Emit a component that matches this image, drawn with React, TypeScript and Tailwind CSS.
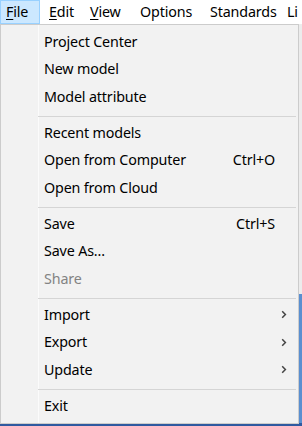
import React from 'react';

type Item =
  | { kind: 'item'; label: string; shortcut?: string; submenu?: boolean; disabled?: boolean }
  | { kind: 'sep' };

const items: Item[] = [
  { kind: 'item', label: 'Project Center' },
  { kind: 'item', label: 'New model' },
  { kind: 'item', label: 'Model attribute' },
  { kind: 'sep' },
  { kind: 'item', label: 'Recent models' },
  { kind: 'item', label: 'Open from Computer', shortcut: 'Ctrl+O' },
  { kind: 'item', label: 'Open from Cloud' },
  { kind: 'sep' },
  { kind: 'item', label: 'Save', shortcut: 'Ctrl+S' },
  { kind: 'item', label: 'Save As...' },
  { kind: 'item', label: 'Share', disabled: true },
  { kind: 'sep' },
  { kind: 'item', label: 'Import', submenu: true },
  { kind: 'item', label: 'Export', submenu: true },
  { kind: 'item', label: 'Update', submenu: true },
  { kind: 'sep' },
  { kind: 'item', label: 'Exit' },
];

const Chevron: React.FC = () => (
  <svg width="6" height="9" viewBox="0 0 6 9" className="block">
    <path d="M1.2 1.3 L4.4 4.5 L1.2 7.7" fill="none" stroke="#444" strokeWidth="1.5" />
  </svg>
);

const MenuRow: React.FC<{ item: Extract<Item, { kind: 'item' }> }> = ({ item }) => (
  <div className={`flex items-center h-[27.5px] pl-[43px] ${item.disabled ? 'text-[#838383]' : 'text-black'}`}>
    <span className="flex-1 whitespace-nowrap">{item.label}</span>
    {item.shortcut && <span className="whitespace-nowrap">{item.shortcut}</span>}
    <span className="w-[23px] shrink-0 flex items-center pl-[6px]">
      {item.submenu && <Chevron />}
    </span>
  </div>
);

const App: React.FC = () => {
  return (
    <div className="w-[302px] h-[426px] bg-white overflow-hidden flex flex-col font-['Segoe_UI','Noto_Sans',sans-serif] text-[14.3px] tracking-[-0.15px] leading-none">
      {/* menu bar */}
      <div className="h-[24px] flex items-stretch shrink-0 bg-white whitespace-nowrap">
        <div className="w-[40px] shrink-0 bg-[#cce8ff] border border-[#99d1ff] pl-[5px] flex items-center">
          <span><span className="underline underline-offset-2">F</span>ile</span>
        </div>
        <div className="w-[41px] ml-[9px] shrink-0 flex items-center">
          <span><span className="underline underline-offset-2">E</span>dit</span>
        </div>
        <div className="w-[50px] shrink-0 flex items-center">
          <span><span className="underline underline-offset-2">V</span>iew</span>
        </div>
        <div className="w-[70px] shrink-0 flex items-center">Options</div>
        <div className="w-[77px] shrink-0 flex items-center">Standards</div>
        <div className="flex items-center">Li</div>
      </div>

      {/* area under the menu bar */}
      <div className="flex flex-1 min-h-0">
        <div className="relative w-[299px] shrink-0 bg-[#f2f2f2] border border-[#cccccc] pt-[3px] pb-[3px] self-start">
          <div className="absolute left-[37px] top-0 bottom-0 w-px bg-[#fbfbfb]" />
          <div className="relative">
            {items.map((item, i) =>
              item.kind === 'sep' ? (
                <div key={i} className="h-[8.5px] pt-[5px]">
                  <div className="ml-[37px] mr-[2px] h-px bg-[#d5d5d5]" />
                </div>
              ) : (
                <MenuRow key={i} item={item} />
              )
            )}
          </div>
        </div>
        <div className="flex-1 flex flex-col">
          <div className="h-[270px] bg-[#ececec]" />
          <div className="flex-1 bg-[#5a8fd0]" />
        </div>
      </div>
      <div className="h-[3px] bg-[#2f5aa0] shrink-0" />
    </div>
  );
};

export default App;
